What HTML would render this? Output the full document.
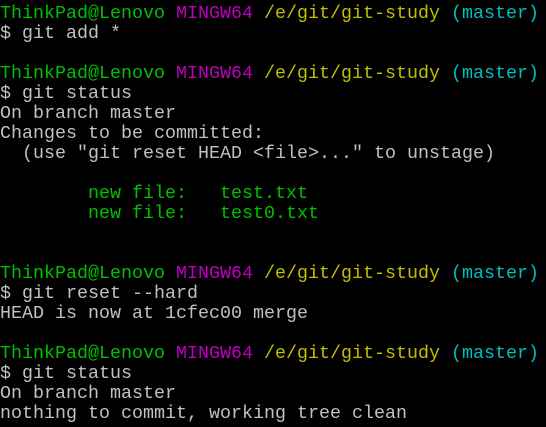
<!DOCTYPE html>
<html><head><meta charset="utf-8"><style>
html,body{margin:0;padding:0;background:#000;width:546px;height:427px;overflow:hidden}
pre{margin:0;padding:4px 0 0 0;font-family:"Liberation Mono",monospace;font-size:18.33px;line-height:20px;color:#c0c0c0;white-space:pre}
.g{color:#00bf00}.m{color:#bf00bf}.y{color:#bfbf00}.c{color:#00bfbf}
</style></head><body><pre><span class="g">ThinkPad@Lenovo</span> <span class="m">MINGW64</span> <span class="y">/e/git/git-study</span> <span class="c">(master)</span>
$ git add *

<span class="g">ThinkPad@Lenovo</span> <span class="m">MINGW64</span> <span class="y">/e/git/git-study</span> <span class="c">(master)</span>
$ git status
On branch master
Changes to be committed:
  (use "git reset HEAD &lt;file&gt;..." to unstage)

<span class="g">        new file:   test.txt</span>
<span class="g">        new file:   test0.txt</span>


<span class="g">ThinkPad@Lenovo</span> <span class="m">MINGW64</span> <span class="y">/e/git/git-study</span> <span class="c">(master)</span>
$ git reset --hard
HEAD is now at 1cfec00 merge

<span class="g">ThinkPad@Lenovo</span> <span class="m">MINGW64</span> <span class="y">/e/git/git-study</span> <span class="c">(master)</span>
$ git status
On branch master
nothing to commit, working tree clean
</pre></body></html>
